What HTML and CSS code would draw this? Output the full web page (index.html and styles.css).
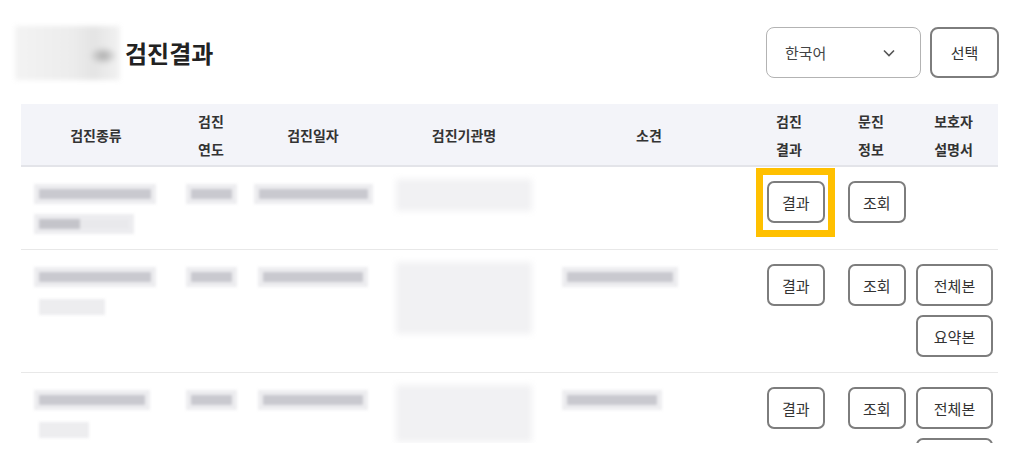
FILE: index.html
```html
<!DOCTYPE html>
<html lang="ko">
<head>
  <meta charset="UTF-8" />
  <title>검진결과</title>
  <link rel="stylesheet" href="styles.css">
</head>
<body>
  <div class="page">
    <div class="top">
      <div class="title">
        <span class="logo-redact"></span>
        <h1>검진결과</h1>
      </div>
      <div class="lang">
        <div class="select">
          <span>한국어</span>
          <svg width="12" height="8" viewBox="0 0 12 8"><polyline points="1,1.5 6,6.5 11,1.5" fill="none" stroke="#555" stroke-width="1.6"/></svg>
        </div>
        <button class="btn btn-strong">선택</button>
      </div>
    </div>

    <div class="table-wrap">
      <table>
        <colgroup>
          <col class="c-kind"><col class="c-year"><col class="c-date"><col class="c-org">
          <col class="c-note"><col class="c-res"><col class="c-quest"><col class="c-guide">
        </colgroup>
        <thead>
          <tr>
            <th>검진종류</th>
            <th>검진<br>연도</th>
            <th>검진일자</th>
            <th>검진기관명</th>
            <th>소견</th>
            <th>검진<br>결과</th>
            <th>문진<br>정보</th>
            <th>보호자<br>설명서</th>
          </tr>
        </thead>
        <tbody>
          <tr>
            <td class="kind">
              <div class="line"><span class="bar w112"></span></div>
              <div class="line"><span class="bar bar-split w90"></span></div>
            </td>
            <td class="mid"><div class="line"><span class="bar w41"></span></div></td>
            <td class="mid"><div class="line"><span class="bar w109"></span></div></td>
            <td class="mid"><span class="blot h32"></span></td>
            <td class="note"></td>
            <td class="act-res"><div class="btns"><button class="btn marked">결과</button></div></td>
            <td class="act-quest"><div class="btns"><button class="btn">조회</button></div></td>
            <td class="act-guide"></td>
          </tr>
          <tr>
            <td class="kind">
              <div class="line"><span class="bar w112"></span></div>
              <div class="line"><span class="bar bar-light w66"></span></div>
            </td>
            <td class="mid"><div class="line"><span class="bar w41"></span></div></td>
            <td class="mid"><div class="line"><span class="bar w100"></span></div></td>
            <td class="mid"><span class="blot h72"></span></td>
            <td class="note"><div class="line"><span class="bar w106"></span></div></td>
            <td class="act-res"><div class="btns"><button class="btn">결과</button></div></td>
            <td class="act-quest"><div class="btns"><button class="btn">조회</button></div></td>
            <td class="act-guide">
              <div class="btns">
                <button class="btn">전체본</button>
                <button class="btn">요약본</button>
              </div>
            </td>
          </tr>
          <tr>
            <td class="kind">
              <div class="line"><span class="bar w106"></span></div>
              <div class="line"><span class="bar bar-light w50"></span></div>
            </td>
            <td class="mid"><div class="line"><span class="bar w41"></span></div></td>
            <td class="mid"><div class="line"><span class="bar w100"></span></div></td>
            <td class="mid"><span class="blot h57"></span></td>
            <td class="note"><div class="line"><span class="bar w90"></span></div></td>
            <td class="act-res"><div class="btns"><button class="btn">결과</button></div></td>
            <td class="act-quest"><div class="btns"><button class="btn">조회</button></div></td>
            <td class="act-guide">
              <div class="btns">
                <button class="btn">전체본</button>
                <span class="btn btn-edge"></span>
              </div>
            </td>
          </tr>
        </tbody>
      </table>
    </div>
  </div>
</body>
</html>
```

FILE: styles.css
```css
body {
  margin: 0;
  font-family: "Noto Sans CJK KR", "Noto Sans", sans-serif;
  color: #333;
  background: #fff;
}
.page {
  padding: 27px 25px 0 21px;
}
.top {
  display: flex;
  justify-content: space-between;
  align-items: center;
  height: 51px;
}
.title {
  display: flex;
  align-items: center;
}
.logo-redact {
  width: 105px;
  height: 54px;
  margin-left: -6px;
  background:
    radial-gradient(ellipse 14px 9px at 84% 55%, #a9a9a9, rgba(200, 200, 200, 0) 100%),
    linear-gradient(90deg, #f3f3f3 0, #ececec 55%, #e4e4e4 75%, #f2f2f2 100%);
  filter: blur(2.5px);
}
h1 {
  margin: 0 0 0 5px;
  font-size: 24px;
  font-weight: 700;
  color: #222;
}
.lang {
  display: flex;
  gap: 9px;
}
.select {
  box-sizing: border-box;
  width: 155px;
  height: 51px;
  border: 1px solid #b3b3b3;
  border-radius: 8px;
  display: flex;
  align-items: center;
  justify-content: space-between;
  padding: 0 25px 0 18px;
  font-size: 15px;
  color: #444;
}
.btn {
  box-sizing: border-box;
  height: 42px;
  padding: 0 13px;
  border: 2px solid #7d7d7d;
  border-radius: 7px;
  background: #fff;
  font-family: inherit;
  font-size: 15px;
  color: #333;
  cursor: pointer;
}
.btn-strong {
  width: 69px;
  height: 51px;
  border-radius: 8px;
}
.btn-edge {
  display: block;
  flex-shrink: 0;
}
.table-wrap {
  margin-top: 26px;
  height: 339px;
  overflow: hidden;
}
table {
  width: 977px;
  border-collapse: collapse;
  table-layout: fixed;
}
.c-kind { width: 150px; }
.c-year { width: 80px; }
.c-date { width: 124px; }
.c-org { width: 178px; }
.c-note { width: 192px; }
.c-res { width: 88px; }
.c-quest { width: 76px; }
.c-guide { width: 89px; }
th {
  background: #f3f4f9;
  height: 61px;
  padding: 0;
  font-size: 14px;
  font-weight: 700;
  line-height: 28px;
  color: #333;
  border-bottom: 2px solid #e3e4e9;
}
td {
  padding: 12px 0 10px;
  vertical-align: top;
  border-bottom: 1px solid #e8e8e8;
}
.kind { padding-left: 18px; }
.mid { text-align: center; }
.note { padding-left: 14px; }
.act-res { padding-left: 22px; }
.act-quest { padding-left: 15px; }
.act-guide { padding-left: 7px; }
.act-guide .btn { min-width: 77px; }
.btns {
  display: flex;
  flex-direction: column;
  align-items: flex-start;
  gap: 9px;
  padding: 2px 0 5px;
}
.marked {
  position: relative;
}
.marked::after {
  content: "";
  position: absolute;
  left: -13px;
  top: -15px;
  right: -12px;
  bottom: -16px;
  border: 7px solid #ffc000;
}
.line {
  height: 30px;
  display: flex;
  align-items: center;
}
.mid .line {
  justify-content: center;
}
.bar {
  display: block;
  height: 10px;
  background: #c9c9cf;
  box-shadow: 0 0 0 5px #ededf0;
  filter: blur(1.5px);
}
.bar-split {
  background: linear-gradient(90deg, #c4c4ca 0 46%, #e9e9ec 46%);
}
.bar-light {
  height: 16px;
  background: #ededef;
  box-shadow: none;
}
.blot {
  display: block;
  width: 136px;
  margin: 0 auto;
  background: #f1f1f3;
  filter: blur(3px);
}
.h32 { height: 32px; }
.h57 { height: 57px; }
.h72 { height: 72px; }
.w41 { width: 41px; }
.w50 { width: 50px; }
.w66 { width: 66px; }
.w90 { width: 90px; }
.w100 { width: 100px; }
.w106 { width: 106px; }
.w109 { width: 109px; }
.w112 { width: 112px; }
```
